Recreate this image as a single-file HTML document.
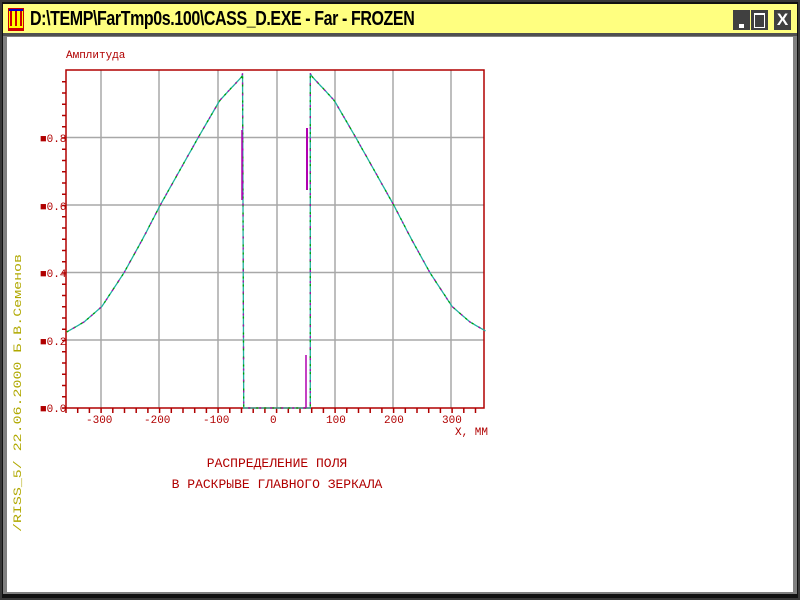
<!DOCTYPE html>
<html><head><meta charset="utf-8"><style>
html,body{margin:0;padding:0;width:800px;height:600px;overflow:hidden;background:#303030}
.abs{position:absolute}
</style></head><body>
<div class="abs" style="left:0;top:0;width:800px;height:600px;background:#383838"></div>
<div class="abs" style="left:2px;top:2px;width:796px;height:596px;background:#111"></div>
<div class="abs" style="left:3px;top:4px;width:794px;height:590px;background:#808080"></div>
<div class="abs" style="left:3px;top:4px;width:794px;height:29px;background:#ffff80"></div>
<div class="abs" style="left:3px;top:33px;width:794px;height:3px;background:#505050"></div>
<!-- icon -->
<div class="abs" style="left:8px;top:8px;width:16px;height:23px;background:#ffff00;border:1px solid #c00;box-sizing:border-box"></div>
<div class="abs" style="left:10px;top:10px;width:2px;height:16px;background:#c00"></div>
<div class="abs" style="left:15px;top:10px;width:2px;height:16px;background:#c00"></div>
<div class="abs" style="left:20px;top:10px;width:2px;height:16px;background:#c00"></div>
<div class="abs" style="left:9px;top:9px;width:14px;height:2px;background:#00c"></div>
<div class="abs" style="left:9px;top:28px;width:14px;height:3px;background:#c00"></div>
<div class="abs" style="left:30px;top:8px;font:bold 20px 'Liberation Sans',sans-serif;color:#000;letter-spacing:-0.5px;transform:scaleX(0.8);transform-origin:0 0;white-space:nowrap;line-height:22px">D:\TEMP\FarTmp0s.100\CASS_D.EXE - Far - FROZEN</div>
<div class="abs" style="left:733px;top:10px;width:17px;height:20px;background:#404040"></div>
<div class="abs" style="left:739px;top:24px;width:5px;height:4px;background:#fff"></div>
<div class="abs" style="left:751px;top:10px;width:17px;height:20px;background:#404040"></div>
<div class="abs" style="left:754px;top:13px;width:9px;height:12px;border:1px solid #fff;border-top-width:2px"></div>
<div class="abs" style="left:774px;top:10px;width:17px;height:20px;background:#404040;color:#fff;font:bold 17px 'Liberation Sans',sans-serif;text-align:center;line-height:20px">X</div>
<div class="abs" style="left:7px;top:37px;width:786px;height:555px;background:#fff"></div>

<svg class="abs" style="left:0;top:0" width="800" height="600" id="s">
<g stroke="#a8a8a8" stroke-width="1.5">
<line x1="101" y1="70" x2="101" y2="408"/><line x1="159" y1="70" x2="159" y2="408"/>
<line x1="218" y1="70" x2="218" y2="408"/><line x1="277" y1="70" x2="277" y2="408"/>
<line x1="335" y1="70" x2="335" y2="408"/><line x1="393" y1="70" x2="393" y2="408"/>
<line x1="451" y1="70" x2="451" y2="408"/>
<line x1="66" y1="137.5" x2="484" y2="137.5"/><line x1="66" y1="205" x2="484" y2="205"/>
<line x1="66" y1="272.5" x2="484" y2="272.5"/><line x1="66" y1="340" x2="484" y2="340"/>
</g>
<rect x="66" y="70" width="418" height="338" fill="none" stroke="#b00000" stroke-width="1.5"/>
<g id="ticks" stroke="#b00000" stroke-width="1.5"></g>
<path id="cv" fill="none" stroke="#20b0a0" stroke-width="1.3"/>
<path id="cv2" fill="none" stroke="#00a000" stroke-width="1.3" stroke-dasharray="2 6"/>
<path id="cv3" fill="none" stroke="#b000b0" stroke-width="1.3" stroke-dasharray="2 9" stroke-dashoffset="4"/>
<line x1="242" y1="130" x2="242" y2="200" stroke="#b000b0" stroke-width="1.5"/>
<line x1="307" y1="128" x2="307" y2="190" stroke="#b000b0" stroke-width="2"/>
<line x1="306" y1="355" x2="306" y2="408" stroke="#b000b0" stroke-width="1.5"/>
<g font-family="Liberation Mono,monospace" font-size="11" fill="#b00000">
<text x="40" y="412">■0.0</text><text x="40" y="345">■0.2</text><text x="40" y="277">■0.4</text>
<text x="40" y="210">■0.6</text><text x="40" y="142">■0.8</text>
<text x="86" y="423">-300</text><text x="144" y="423">-200</text><text x="203" y="423">-100</text>
<text x="270" y="423">0</text><text x="326" y="423">100</text><text x="384" y="423">200</text><text x="442" y="423">300</text>
<text x="455" y="435">X,  MM</text>
<text x="66" y="58">Амплитуда</text>
</g>
<g font-family="Liberation Mono,monospace" font-size="13" fill="#b00000" text-anchor="middle">
<text x="277" y="467">РАСПРЕДЕЛЕНИЕ ПОЛЯ</text>
<text x="277" y="488">В РАСКРЫВЕ ГЛАВНОГО ЗЕРКАЛА</text>
</g>
<text transform="translate(21,532) rotate(-90)" font-family="Liberation Mono,monospace" font-size="11" fill="#b0a800" textLength="278" lengthAdjust="spacingAndGlyphs">/RISS_5/  22.06.2000  Б.В.Семенов</text>
</svg>
<script>
var X=function(mm){return 277+mm*0.584},Y=function(a){return 408-a*338};
var P=[[55,0.99],[98,0.91],[135,0.8],[200,0.6],[230,0.5],[262,0.4],[300,0.3],[330,0.255],[365,0.22]];
function amp(mm){var t=Math.abs(mm);for(var i=1;i<P.length;i++){if(t<=P[i][0]){var a=P[i-1],b=P[i],f=(t-a[0])/(b[0]-a[0]);return a[1]+(b[1]-a[1])*f;}}return P[P.length-1][1];}
var d="";for(var mm=-360;mm<=-60;mm+=3){d+=(d?"L":"M")+X(mm).toFixed(1)+","+Y(amp(mm)).toFixed(1);}
d+="L"+X(-59)+","+Y(0.99)+"L"+X(-57)+",408L"+X(57)+",408L"+X(57)+","+Y(0.99);
for(var mm=60;mm<=357;mm+=3){d+="L"+X(mm).toFixed(1)+","+Y(amp(mm)).toFixed(1);}
["cv","cv2","cv3"].forEach(function(i){document.getElementById(i).setAttribute("d",d)});
var g=document.getElementById("ticks"),h="";
for(var y=408;y>=72;y-=11.25){h+='<line x1="62" y1="'+y+'" x2="66" y2="'+y+'"/>';}
for(var x=66;x<=484;x+=11.7){h+='<line x1="'+x+'" y1="408" x2="'+x+'" y2="413"/>';}
g.innerHTML=h;
</script>
</body></html>
